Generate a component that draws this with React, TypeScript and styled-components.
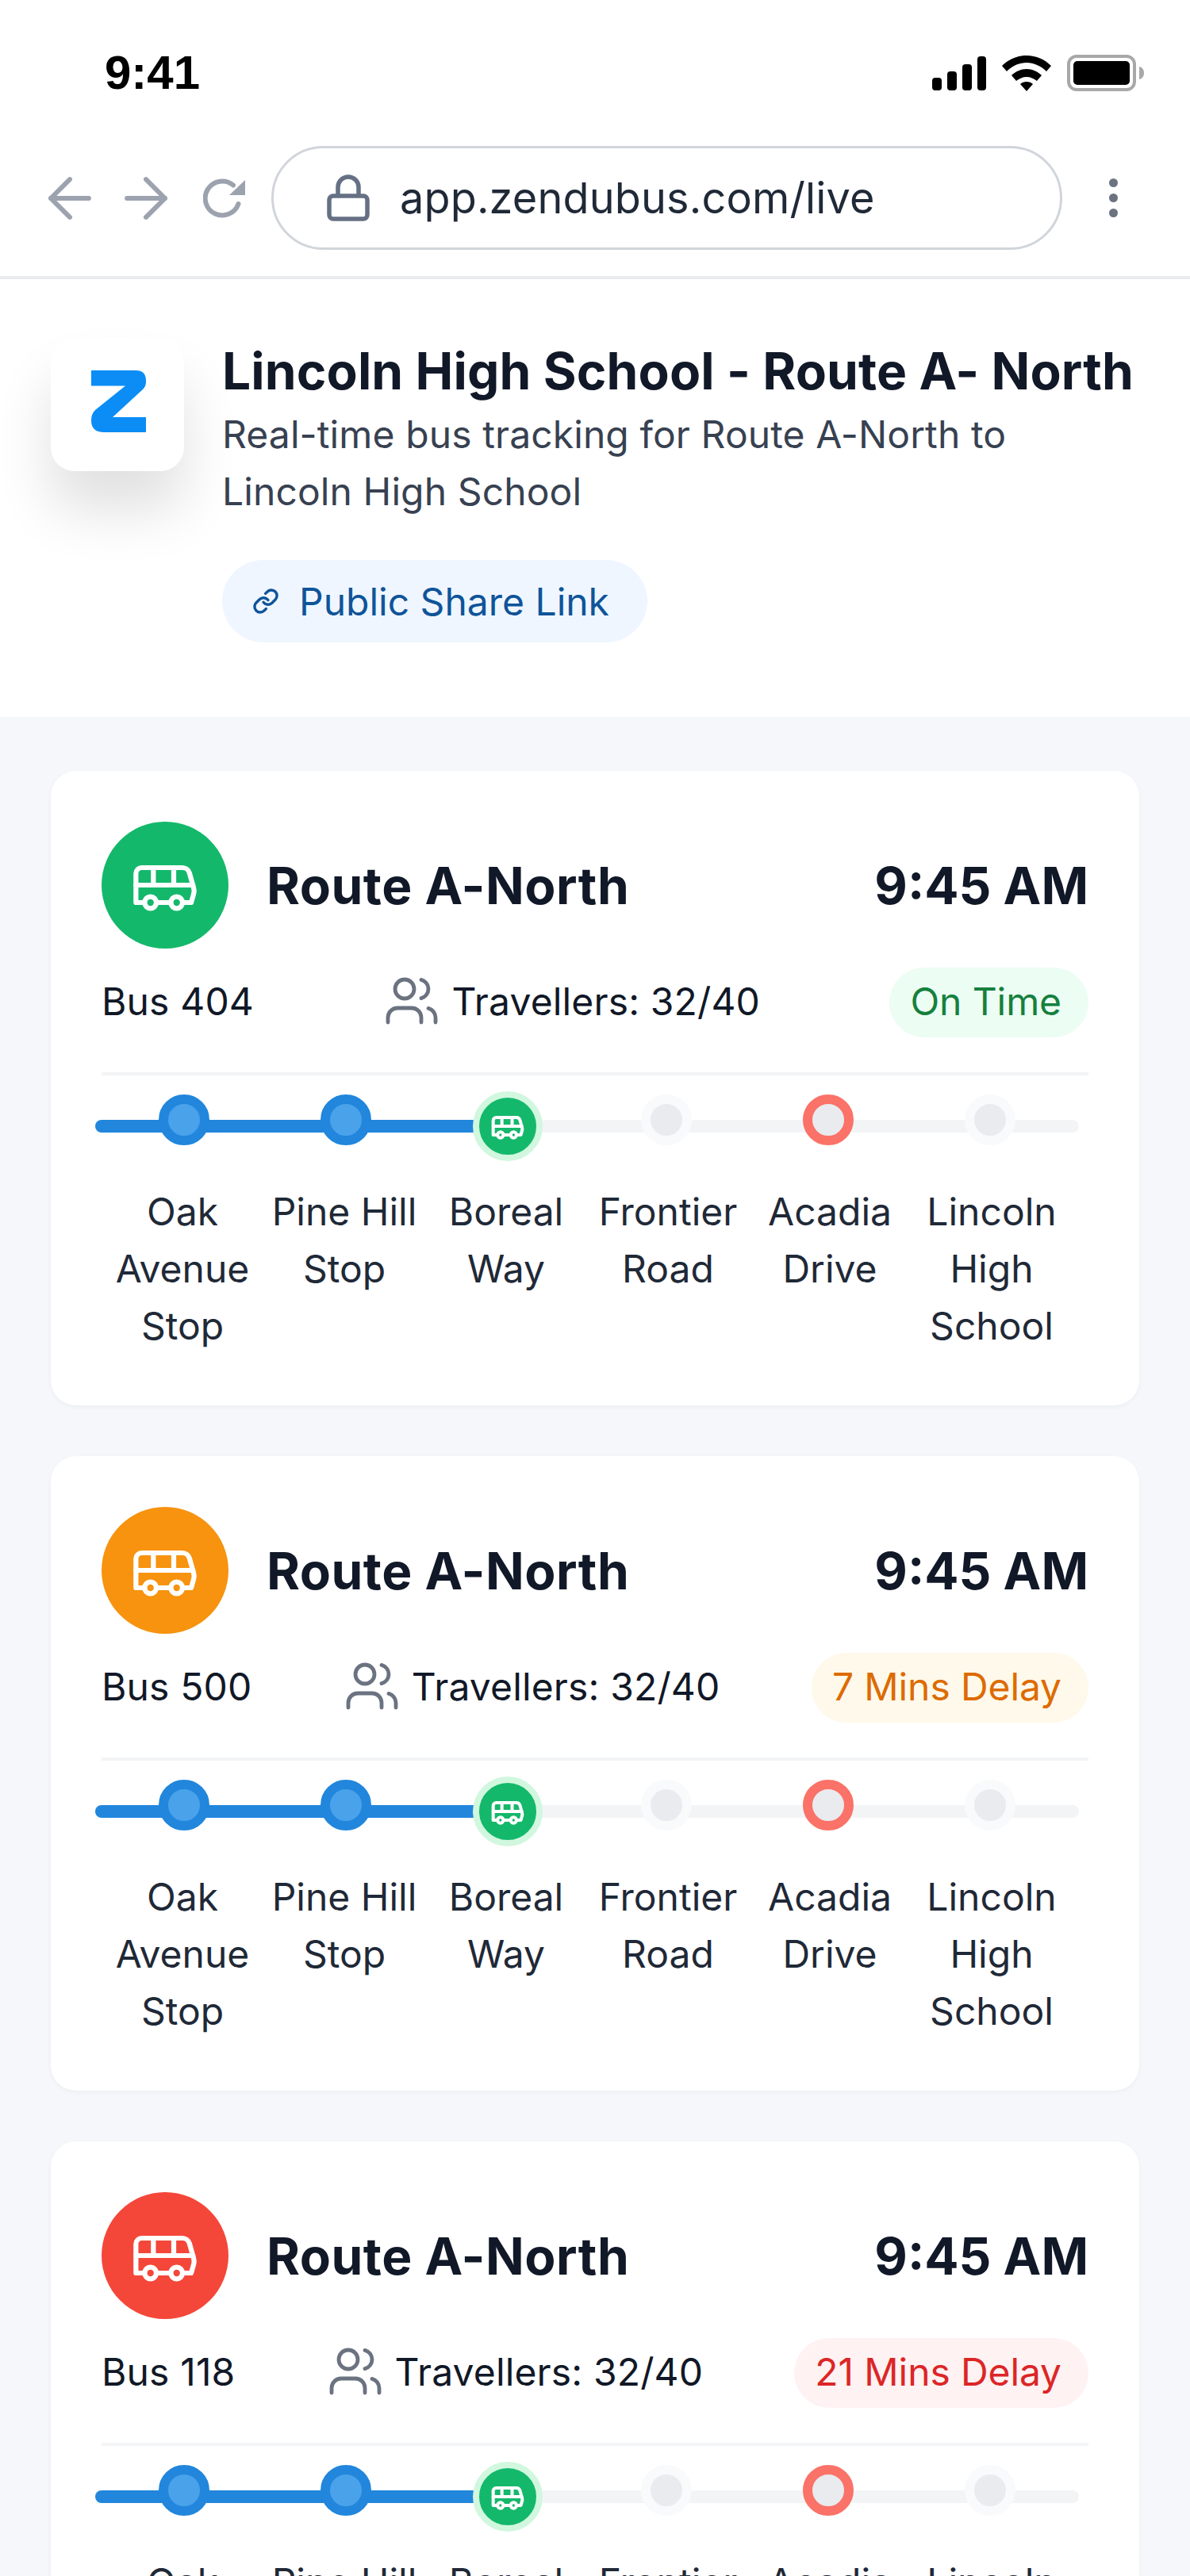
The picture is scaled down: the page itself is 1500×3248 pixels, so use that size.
import styled, { createGlobalStyle } from "styled-components";
import { ArrowLeft, ArrowRight, Bus, Link, Users } from "lucide-react";

const GlobalStyle = createGlobalStyle`
  html, body {
    margin: 0;
    padding: 0;
    background: #f5f7fa;
  }
  * {
    box-sizing: border-box;
  }
`;

const Page = styled.div`
  width: 1500px;
  height: 3248px;
  overflow: hidden;
  font-family: Inter, "Liberation Sans", sans-serif;
  color: #111827;
  background: #f5f7fa;
`;

const TopChrome = styled.div`
  height: 352px;
  background: #ffffff;
  border-bottom: 4px solid #e9ebef;
`;

const StatusBar = styled.div`
  height: 184px;
  padding: 64px 58px 0 132px;
  display: flex;
  align-items: flex-start;
  justify-content: space-between;
`;

const Clock = styled.span`
  font-family: "Liberation Sans", Arial, sans-serif;
  font-size: 60px;
  line-height: 56px;
  font-weight: 700;
  color: #000000;
`;

const StatusIcons = styled.div`
  display: flex;
  align-items: center;
  gap: 20px;
  height: 50px;
  margin-top: 3px;
`;

const BrowserBar = styled.div`
  display: flex;
  align-items: center;
  padding-left: 47px;
`;

const NavButtons = styled.div`
  display: flex;
  align-items: center;
  gap: 14px;
  width: 295px;
  color: #9ca3af;
`;

const ReloadWrap = styled.span`
  display: flex;
  margin-left: 17px;
`;

const AddressBar = styled.div`
  width: 997px;
  height: 131px;
  border: 3px solid #d1d5db;
  border-radius: 66px;
  display: flex;
  align-items: center;
  gap: 38px;
  padding-left: 67px;
  font-size: 54px;
  letter-spacing: 0.15px;
  color: #1f2937;
`;

const MenuDots = styled.div`
  margin-left: 59px;
  display: flex;
  flex-direction: column;
  gap: 8px;
`;

const Dot = styled.span`
  width: 11px;
  height: 11px;
  border-radius: 50%;
  background: #6b7280;
`;

const Hero = styled.header`
  height: 552px;
  background: #ffffff;
  display: flex;
  padding: 72px 64px 0;
  gap: 48px;
`;

const LogoTile = styled.div`
  flex: none;
  width: 168px;
  height: 168px;
  margin-top: 2px;
  padding: 0 0 8px 3px;
  border-radius: 30px;
  background: #ffffff;
  box-shadow: 0 50px 70px rgba(0, 0, 0, 0.12);
  display: flex;
  align-items: center;
  justify-content: center;
`;

const HeroBody = styled.div`
  display: flex;
  flex-direction: column;
  align-items: flex-start;
`;

const HeroTitle = styled.h1`
  margin: 0;
  font-size: 64px;
  line-height: 88px;
  font-weight: 700;
  letter-spacing: 0.12px;
  color: #111827;
  white-space: nowrap;
`;

const HeroText = styled.p`
  margin: 0;
  width: 1100px;
  font-size: 48px;
  line-height: 72px;
  letter-spacing: 0.1px;
  color: #374151;
`;

const ShareLink = styled.div`
  margin-top: 50px;
  height: 104px;
  padding: 0 48px 0 38px;
  border-radius: 52px;
  background: #eff6ff;
  color: #0f5499;
  font-size: 48px;
  display: flex;
  align-items: center;
  gap: 25px;
`;

const CardList = styled.main`
  display: flex;
  flex-direction: column;
  gap: 64px;
  padding: 68px 64px 64px;
`;

const Card = styled.section`
  flex: none;
  height: 800px;
  padding: 64px;
  background: #ffffff;
  border-radius: 32px;
  box-shadow: 0 2px 6px rgba(17, 24, 39, 0.04);
`;

const CardHeader = styled.div`
  display: flex;
  align-items: center;
  gap: 48px;
`;

const Avatar = styled.div<{ $color: string }>`
  flex: none;
  width: 160px;
  height: 160px;
  border-radius: 50%;
  background: ${(p) => p.$color};
  color: #ffffff;
  display: flex;
  align-items: center;
  justify-content: center;
`;

const RouteName = styled.h2`
  margin: 0;
  flex: 1;
  font-size: 64px;
  font-weight: 700;
  letter-spacing: 0.5px;
  color: #111827;
`;

const Eta = styled.span`
  font-size: 64px;
  font-weight: 700;
  color: #111827;
`;

const InfoRow = styled.div`
  margin-top: 24px;
  padding-bottom: 44px;
  border-bottom: 4px solid #f3f4f6;
  display: flex;
  align-items: center;
  justify-content: space-between;
  font-size: 48px;
  letter-spacing: 0.15px;
  color: #111827;
  & > * {
    padding-bottom: 4px;
  }
`;

const Travellers = styled.div`
  display: flex;
  align-items: center;
  gap: 14px;
  color: #111827;
  svg {
    color: #6b7280;
  }
`;

const StatusPill = styled.span<{ $bg: string; $fg: string }>`
  height: 88px;
  padding: 0 34px 4px 26px;
  border-radius: 44px;
  display: flex;
  align-items: center;
  letter-spacing: -0.1px;
  background: ${(p) => p.$bg};
  color: ${(p) => p.$fg};
`;

const Timeline = styled.div`
  position: relative;
  margin-top: 20px;
  display: grid;
  grid-template-columns: repeat(6, 204px);
`;

const TrackBase = styled.div`
  position: absolute;
  left: -8px;
  top: 36px;
  width: 1240px;
  height: 16px;
  border-radius: 8px;
  background: #f3f4f6;
`;

const TrackDone = styled.div`
  position: absolute;
  left: -8px;
  top: 36px;
  width: 490px;
  height: 16px;
  border-radius: 8px;
  background: #2186dc;
`;

const Stop = styled.div`
  position: relative;
  display: flex;
  flex-direction: column;
  align-items: center;
`;

const NodeSlot = styled.div<{ $late: boolean }>`
  height: 116px;
  display: flex;
  justify-content: center;
  margin: ${(p) => (p.$late ? "0 4px 0 0" : "0 0 0 4px")};
`;

const Node = styled.span<{ $ring: string; $fill: string }>`
  width: 64px;
  height: 64px;
  margin-top: 4px;
  border-radius: 50%;
  border: 12px solid ${(p) => p.$ring};
  background: ${(p) => p.$fill};
`;

const BusNode = styled.span`
  width: 88px;
  height: 88px;
  border-radius: 50%;
  border: 8px solid #d1f7df;
  background: #14b86b;
  color: #ffffff;
  display: flex;
  align-items: center;
  justify-content: center;
`;

const StopLabel = styled.span`
  font-size: 48px;
  line-height: 72px;
  text-align: center;
  color: #1f2937;
`;

const ZLogo = () => (
  <svg width="69" height="78" viewBox="0 0 69 78">
    <path
      d="M0 0H56Q69 0 69 13V15Q69 20 65 24L27 59H69V78H16Q0 78 0 63Q0 55 5 50L43 19.5H0Z"
      fill="#0b8df5"
    />
  </svg>
);

const SignalIcon = () => (
  <svg width="68" height="43" viewBox="0 0 68 43" fill="#000">
    <rect x="0" y="27" width="12" height="16" rx="4" />
    <rect x="19" y="19" width="12" height="24" rx="4" />
    <rect x="38" y="10" width="12" height="33" rx="4" />
    <rect x="57" y="0" width="11" height="43" rx="4" />
  </svg>
);

const WifiIcon = () => (
  <svg width="62" height="45" viewBox="0 0 62 45" fill="#000">
    <path d="M31 0c12 0 23 5 31 13l-6 7C49 13 40 9 31 9S13 13 6 20l-6-7C8 5 19 0 31 0z" />
    <path d="M31 17c7 0 14 3 19 8l-6 7c-4-3-8-5-13-5s-9 2-13 5l-6-7c5-5 12-8 19-8z" />
    <path d="M31 33c3 0 6 1 8 3l-8 9-8-9c2-2 5-3 8-3z" />
  </svg>
);

const BatteryIcon = () => (
  <svg width="97" height="46" viewBox="0 0 97 46">
    <rect x="2" y="2" width="83" height="42" rx="10" fill="none" stroke="#a8a8a8" strokeWidth="4" />
    <rect x="8" y="8" width="71" height="30" rx="5" fill="#000" />
    <path d="M91 15c4 1 6 4 6 8s-2 7-6 8z" fill="#a8a8a8" />
  </svg>
);

const ReloadIcon = () => (
  <svg width="54" height="50" viewBox="0 0 54 50" fill="none">
    <path
      d="M38 8.5A21.5 21.5 0 1 0 44.5 32"
      stroke="#9ca3af"
      strokeWidth="6"
      strokeLinecap="round"
    />
    <path d="M53 2V21H33Z" fill="#9ca3af" />
  </svg>
);

const LockIcon = () => (
  <svg width="54" height="59" viewBox="0 0 54 59" fill="none" stroke="#667085" strokeWidth="5.5">
    <rect x="3" y="27" width="48" height="29" rx="5" strokeLinejoin="round" />
    <path d="M14 27V16a13 13 0 0 1 26 0V27" />
  </svg>
);

type Status = {
  bus: string;
  color: string;
  label: string;
  bg: string;
  fg: string;
};

const routes: Status[] = [
  { bus: "Bus 404", color: "#14b86b", label: "On Time", bg: "#ecfdf3", fg: "#15803d" },
  { bus: "Bus 500", color: "#f7930f", label: "7 Mins Delay", bg: "#fff9eb", fg: "#dd6b00" },
  { bus: "Bus 118", color: "#f44739", label: "21 Mins Delay", bg: "#fef2f2", fg: "#dc2626" },
];

const stops = [
  { name: "Oak Avenue Stop", kind: "done" },
  { name: "Pine Hill Stop", kind: "done" },
  { name: "Boreal Way", kind: "bus" },
  { name: "Frontier Road", kind: "next" },
  { name: "Acadia Drive", kind: "alert" },
  { name: "Lincoln High School", kind: "next" },
];

const nodeColors: Record<string, { ring: string; fill: string }> = {
  done: { ring: "#2186dc", fill: "#4aa2ea" },
  next: { ring: "#f9fafb", fill: "#e9ebef" },
  alert: { ring: "#fa7268", fill: "#e9ebef" },
};

export default function App() {
  return (
    <Page>
      <GlobalStyle />
      <TopChrome>
        <StatusBar>
          <Clock>9:41</Clock>
          <StatusIcons>
            <SignalIcon />
            <WifiIcon />
            <BatteryIcon />
          </StatusIcons>
        </StatusBar>
        <BrowserBar>
          <NavButtons>
            <ArrowLeft size={82} strokeWidth={1.75} />
            <ArrowRight size={82} strokeWidth={1.75} />
            <ReloadWrap>
              <ReloadIcon />
            </ReloadWrap>
          </NavButtons>
          <AddressBar>
            <LockIcon />
            <span>app.zendubus.com/live</span>
          </AddressBar>
          <MenuDots>
            <Dot />
            <Dot />
            <Dot />
          </MenuDots>
        </BrowserBar>
      </TopChrome>

      <Hero>
        <LogoTile>
          <ZLogo />
        </LogoTile>
        <HeroBody>
          <HeroTitle>Lincoln High School - Route A- North</HeroTitle>
          <HeroText>Real-time bus tracking for Route A-North to Lincoln High School</HeroText>
          <ShareLink>
            <Link size={34} strokeWidth={2.4} />
            Public Share Link
          </ShareLink>
        </HeroBody>
      </Hero>

      <CardList>
        {routes.map((r) => (
          <Card key={r.bus}>
            <CardHeader>
              <Avatar $color={r.color}>
                <Bus size={88} strokeWidth={1.7} />
              </Avatar>
              <RouteName>Route A-North</RouteName>
              <Eta>9:45 AM</Eta>
            </CardHeader>
            <InfoRow>
              <span>{r.bus}</span>
              <Travellers>
                <Users size={72} strokeWidth={1.6} />
                Travellers: 32/40
              </Travellers>
              <StatusPill $bg={r.bg} $fg={r.fg}>
                {r.label}
              </StatusPill>
            </InfoRow>
            <Timeline>
              <TrackBase />
              <TrackDone />
              {stops.map((s, i) => (
                <Stop key={s.name}>
                  <NodeSlot $late={i > 2}>
                    {s.kind === "bus" ? (
                      <BusNode>
                        <Bus size={44} strokeWidth={2.2} />
                      </BusNode>
                    ) : (
                      <Node $ring={nodeColors[s.kind].ring} $fill={nodeColors[s.kind].fill} />
                    )}
                  </NodeSlot>
                  <StopLabel>{s.name}</StopLabel>
                </Stop>
              ))}
            </Timeline>
          </Card>
        ))}
      </CardList>
    </Page>
  );
}
